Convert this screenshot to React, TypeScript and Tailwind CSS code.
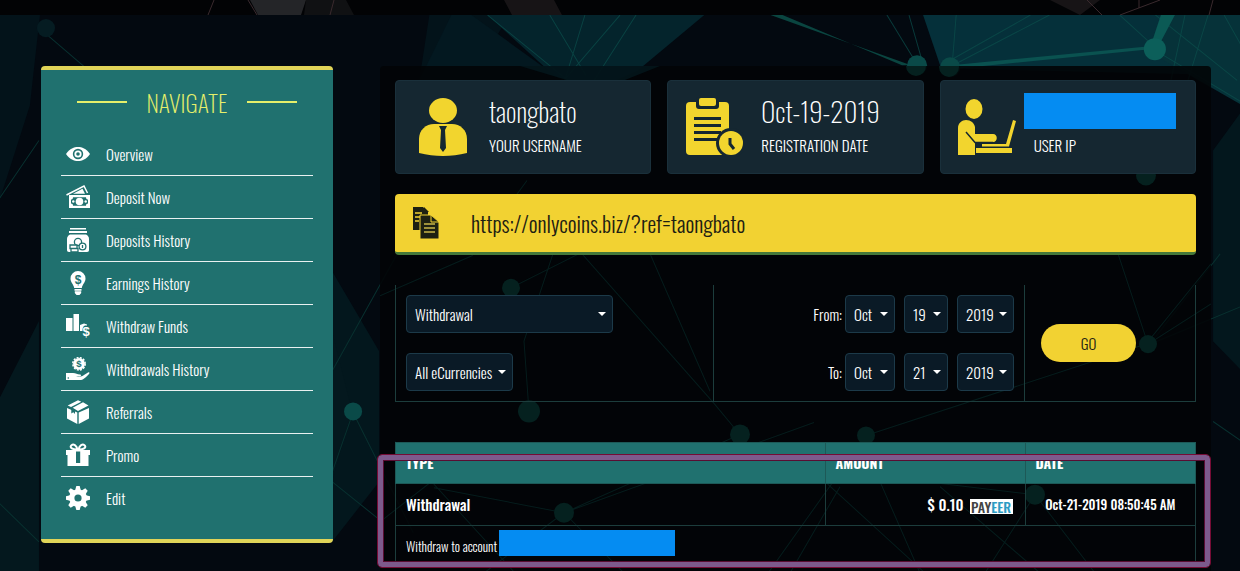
import type { ReactNode, SVGProps } from "react";

const Background = () => (
  <svg
    className="absolute inset-0 h-full w-full"
    viewBox="0 0 1240 571"
    preserveAspectRatio="xMidYMid slice"
    aria-hidden="true"
  >
    <rect width="1240" height="571" fill="#030910" />
    <path d="M430 15h80l-40 65h-50zM0 15h42l-10 90-32 100z" fill="#03131a" />
    <path d="M488 15h216l-66 55-52 24-20-8z" fill="#04242c" />
    <path d="M452 15h20l90 65H420z" fill="#031820" />
    <path d="M922 15h318v60l-300-7z" fill="#05303a" />
    <path d="M1165 15h75v90l-87-50z" fill="#063239" />
    <path d="M1211 150l29-40v260l-29-30zM333 270l47 80v130l-47 60z" fill="#03171d" />
    <path d="M0 400l41-80v251H0zM333 330l20 80-20 70z" fill="#04181e" />
    <g stroke="#0b4f4c" strokeWidth="1" fill="none" opacity=".7">
      <path d="M886 15l30 49M908 15l14 49M1029 15l-85 48M1048 15l-100 52M955 15l-4 50M1118 15l35 32M1183 15l-14 65M1206 15l-20 65M1222 15l18 32M1153 50l87 52M1135 0l100 80" />
      <path d="M488 15l80 65M550 15l36 60M636 15l-50 78M585 15l-20 65M620 15l-60 70" />
    </g>
    <path d="M770 15l140 50h-9L782 15z" fill="#0a4540" />
    <path d="M940 66l208-20v3L940 70z" fill="#0a5250" />
    <path d="M1159 15h14l-16 30h-8z" fill="#0b5a55" />
    <g stroke="#08302f" strokeWidth="1" fill="none">
      <path d="M46 32l70 60M0 500l41 40M354 411l-21 60M354 411l60 120M333 370l100-180M333 480l50 40M0 200l41-60M1148 343l92-38M1148 343l70-90M1211 420l29 20" />
    </g>
    <g fill="#0a4a48">
      <circle cx="916" cy="65" r="10" />
      <circle cx="949" cy="67" r="10" />
      <circle cx="1153" cy="49" r="11" fill="#0c5f5a" />
      <circle cx="354" cy="410" r="9" />
      <circle cx="48" cy="28" r="9" fill="#051c22" />
    </g>
  </svg>
);

const PanelNetwork = () => (
  <svg
    className="absolute inset-0 h-full w-full"
    viewBox="380 66 831 505"
    preserveAspectRatio="none"
    aria-hidden="true"
  >
    <path d="M520 66h140l-60 24z" fill="#04222a" opacity=".5" />
    <g stroke="#051c1c" strokeWidth="1" fill="none">
      <path d="M527 180l-55 75-92 40M511 287l70-35 133 150 25 30M529 410l-5-70 30-90M640 230l70 160M740 433l-176 78-130-25M866 434l280-91 65-80M866 434l-100 140M1148 343l-50-150M564 511l-80 60M564 511l60 60M564 511l250-90M825 480l100 91M880 480l40 91M840 485l-50 86M940 485l100 86M1035 493l60 78M1035 493l-170-20M1035 493l-50 78M395 440l120 131M380 520l90-70M1148 343l63-40" />
    </g>
    <g fill="#05211f">
      <circle cx="511" cy="287" r="9" />
      <circle cx="529" cy="410" r="11" />
      <circle cx="740" cy="433" r="10" />
      <circle cx="866" cy="434" r="9" />
      <circle cx="564" cy="511" r="10" />
      <circle cx="1035" cy="493" r="10" />
      <circle cx="1148" cy="343" r="9" />
      <circle cx="1146" cy="175" r="10" />
      <circle cx="916" cy="66" r="10" />
      <circle cx="949" cy="67" r="10" />
    </g>
  </svg>
);

const Icon = ({ children, ...props }: SVGProps<SVGSVGElement>) => (
  <svg viewBox="0 0 24 24" fill="currentColor" aria-hidden="true" {...props}>
    {children}
  </svg>
);

const teal = "#20716f";

const EyeIcon = () => (
  <>
    <path d="M0 12C4 6.500 8 5 12 5s8 1.500 12 7c-4 5.500-8 7-12 7S4 17.500 0 12z" />
    <circle cx="12" cy="12" r="5.200" fill={teal} />
    <circle cx="12" cy="12" r="3.600" />
    <circle cx="12" cy="12" r="1.800" fill={teal} />
  </>
);

const CashIcon = () => (
  <>
    <path d="M.500 10L18 1l3.500 7" fill="none" stroke="currentColor" strokeWidth="1.500" />
    <path d="M7 8.800l9.500-5 2.500 5z" />
    <path d="M3 10h21v13H3z" />
    <path d="M7 12.200h13c0 1.600.800 2.300 2 2.300v4c-1.200 0-2 .700-2 2.300H7c0-1.600-.800-2.300-2-2.300v-4c1.200 0 2-.700 2-2.300z" fill={teal} />
    <circle cx="13.500" cy="16.500" r="3.800" />
    <circle cx="7.300" cy="16.500" r="1.200" />
    <circle cx="19.700" cy="16.500" r="1.200" />
  </>
);

const JarIcon = () => (
  <>
    <path d="M4 0h16v1.500H4zM3 3h18v2H3z" />
    <path d="M4 6.500h16c2 1 3 2.500 3 4.500v11c0 1.300-.700 2-2 2H3c-1.300 0-2-.700-2-2V11c0-2 1-3.500 3-4.500z" />
    <g fill="#fff" stroke={teal} strokeWidth="1.300">
      <circle cx="12" cy="14" r="3.600" />
      <path d="M4 17h7v3.500H4zM5 20.500h7V24H5z" />
      <circle cx="16.500" cy="18.500" r="3.400" />
      <path d="M16.500 17v3" />
    </g>
  </>
);

const BulbIcon = () => (
  <>
    <path d="M12 0a7.500 7.500 0 0 1 7.500 7.500c0 4-3 5.500-3.700 9.500H8.200c-.700-4-3.700-5.500-3.700-9.500A7.500 7.500 0 0 1 12 0z" />
    <path d="M8.500 18h7v1.700h-7zM8.800 20.300h6.400V22l-1.700 2h-3l-1.700-2z" />
    <text x="12" y="12.500" textAnchor="middle" fontSize="12" fontWeight="700" fontFamily="Liberation Sans" fill={teal}>
      $
    </text>
  </>
);

const ChartIcon = () => (
  <>
    <path d="M0 4h6.500v13H0zM7.500 0h5.500v17H7.500z" />
    <path d="M14 11l4-1.500 3 1v1c-3-.500-4.500 1-4.500 5.500H14z" />
    <text x="20" y="21.500" textAnchor="middle" fontSize="13" fontWeight="700" fontFamily="Liberation Sans">
      $
    </text>
  </>
);

const HandIcon = () => (
  <>
    <circle cx="13" cy="6.800" r="5.900" />
    <circle cx="13" cy="6.800" r="6.200" fill="none" stroke="currentColor" strokeWidth="1.500" strokeDasharray="2 1.250" />
    <text x="13" y="10.300" textAnchor="middle" fontSize="9.500" fontWeight="700" fontFamily="Liberation Sans" fill={teal}>
      $
    </text>
    <path d="M0 16h7c3 0 4 1.500 7 1.500 1.500 0 1.500 1.500 0 1.700l-4 .300c4 .500 6 .200 8-1.500l4-2.500c1.500-.500 2 .500 1 1.500-4 4-6 6-9 6H0z" />
    <circle cx="2.300" cy="21" r=".8" fill={teal} />
  </>
);

const BoxIcon = () => (
  <>
    <path d="M1 8l10.300 4.500V24L1 18.500zM12.700 12.500L23 8v10.500L12.700 24z" />
    <path d="M12 .200l3.300 1.500L5 7 1.700 5.500zM17 2.300l5.500 3.200L12 11 6.700 7.800z" />
    <path d="M5.300 8.200v5.300l2-1.200L9 14V9.800z" fill={teal} />
  </>
);

const GiftIcon = () => (
  <>
    <path d="M0 7h24v5h-1.500v11h-21V12H0z" />
    <path d="M10 8.500h4.200V20H10z" fill={teal} />
    <g fill="none" stroke="currentColor" strokeWidth="2">
      <path d="M11.500 6.500C5 6.500 3.500 4 5.500 2.200c2-1.500 5 0 6 4.300z" />
      <path d="M12.500 6.500c6.500 0 8-2.500 6-4.300-2-1.500-5 0-6 4.300z" />
    </g>
  </>
);

const GearIcon = () => (
  <>
    {[0, 45, 90, 135].map((angle) => (
      <path key={angle} d="M10.300 0h3.400l1.300 5v14l-1.300 5h-3.400L9 19V5z" transform={`rotate(${angle} 12 12)`} />
    ))}
    <circle cx="12" cy="12" r="8.800" />
    <circle cx="12" cy="12" r="3.600" fill={teal} />
  </>
);

const navItems = [
  { label: "Overview", icon: <EyeIcon /> },
  { label: "Deposit Now", icon: <CashIcon /> },
  { label: "Deposits History", icon: <JarIcon /> },
  { label: "Earnings History", icon: <BulbIcon /> },
  { label: "Withdraw Funds", icon: <ChartIcon /> },
  { label: "Withdrawals History", icon: <HandIcon /> },
  { label: "Referrals", icon: <BoxIcon /> },
  { label: "Promo", icon: <GiftIcon /> },
  { label: "Edit", icon: <GearIcon /> },
];

const Sidebar = () => (
  <nav className="w-[292px] shrink-0 rounded border-y-4 border-[#e0d458] bg-[#20716f] px-5 pb-5">
    <div className="flex h-[63px] items-center justify-center gap-5">
      <span className="h-0.5 w-[50px] bg-[#e6ef6a]" />
      <h2 className="text-2xl font-extralight text-[#e6ef6a]">NAVIGATE</h2>
      <span className="h-0.5 w-[50px] bg-[#e6ef6a]" />
    </div>
    <ul>
      {navItems.map((item) => (
        <li key={item.label} className="border-b border-white/90 last:border-b-0">
          <a href="#" className="flex h-[42px] items-center gap-4 pl-[5px] text-[15px] font-light text-white">
            <Icon className="h-6 w-6">{item.icon}</Icon>
            {item.label}
          </a>
        </li>
      ))}
    </ul>
  </nav>
);

const UserIcon = () => (
  <svg viewBox="0 0 50 60" className="h-[60px] w-[50px]" fill="#f2d52e" aria-hidden="true">
    <ellipse cx="25" cy="13.500" rx="14" ry="12.500" />
    <path d="M1 56V42c0-9 7-15 15-15h18c8 0 15 6 15 15v14c-8 2-16 3-24 3S9 58 1 56z" />
    <path d="M21 29h8l-2 4 1 18-3 4-3-4 1-18z" fill="#152731" />
  </svg>
);

const ClipboardIcon = () => (
  <svg viewBox="0 0 58 60" className="h-[60px] w-[58px]" fill="#f2d52e" aria-hidden="true">
    <rect x="0" y="5" width="43" height="53" rx="4" />
    <rect x="10" y="0" width="23" height="12" rx="3" fill="#152731" />
    <rect x="13" y="1" width="17" height="8" rx="2" />
    <path d="M8 20h27v3H8zM8 27h27v3H8zM8 34h27v3H8zM8 41h24v3H8z" fill="#152731" />
    <circle cx="45" cy="46" r="15" fill="#152731" />
    <circle cx="45" cy="46" r="12" />
    <path d="M44 41v6l4 5" fill="none" stroke="#152731" strokeWidth="3" />
  </svg>
);

const LaptopUserIcon = () => (
  <svg viewBox="0 0 58 60" className="h-[60px] w-[58px]" fill="#f2d52e" aria-hidden="true">
    <ellipse cx="16" cy="12" rx="8.500" ry="10" />
    <path d="M0 58V31c0-5 4-8 8-8 5 0 8 3 9 7v7h18c5 0 5 8 0 8H17v13z" />
    <path d="M8 35l9 10.500h18" fill="none" stroke="#152731" strokeWidth="1.500" />
    <path d="M18 51h36v5H18zM24 47h24l7-24 3 1-7 25.500H24z" />
  </svg>
);

type StatCardProps = { icon: ReactNode; value: ReactNode; label: string };

const StatCard = ({ icon, value, label }: StatCardProps) => (
  <div className="flex h-[94px] min-w-0 flex-1 items-center rounded border border-[#1a303b] bg-[#152731] text-white">
    <div className="flex w-[93px] shrink-0 justify-center">{icon}</div>
    <div>
      <div className="flex h-9 items-center text-[27px] font-extralight">{value}</div>
      <div className="text-[15px] leading-8 font-light">{label}</div>
    </div>
  </div>
);

const CopyIcon = () => (
  <svg viewBox="0 0 26 32" className="h-8 w-[26px]" fill="#1d2012" aria-hidden="true">
    <path d="M0 0h10l5 5v18H0z" />
    <path d="M11 0l5 5h-5z" />
    <path d="M2 6h7M2 10h5M2 14h4" stroke="#f2d232" strokeWidth="1.500" />
    <path d="M7 8h11l8 7v17H7z" stroke="#f2d232" />
    <path d="M18 8v7h8" fill="none" stroke="#f2d232" />
    <path d="M11 17h11M11 21h11M11 25h11" stroke="#c9b64a" strokeWidth="1.500" />
  </svg>
);

type PickerProps = { label: string; options: string[]; className: string };

const Picker = ({ label, options, className }: PickerProps) => (
  <span className={`relative inline-block ${className}`}>
    <select
      aria-label={label}
      className="h-[38px] w-full appearance-none rounded border border-[#1c3a49] bg-[#0a1a26] pl-2 text-[15px] font-light text-white"
    >
      {options.map((option) => (
        <option key={option}>{option}</option>
      ))}
    </select>
    <svg viewBox="0 0 8 4" className="pointer-events-none absolute top-[17px] right-[7px] h-1 w-2" fill="#fff" aria-hidden="true">
      <path d="M0 0h8L4 4z" />
    </svg>
  </span>
);

const DateRow = ({ label, day }: { label: string; day: string }) => (
  <div className="flex items-center justify-end">
    <span className="mr-[3px] text-[15px] font-light">{label}:</span>
    <div className="flex gap-[9px]">
      <Picker label={`${label} month`} options={["Oct"]} className="w-[50px]" />
      <Picker label={`${label} day`} options={[day]} className="w-11" />
      <Picker label={`${label} year`} options={["2019"]} className="w-[57px]" />
    </div>
  </div>
);

const Filters = () => (
  <form className="mt-[30px] grid grid-cols-[318fr_311fr_170fr] divide-x divide-[#1c3d3c] border-x border-b border-[#1c3d3c] text-white">
    <div className="flex flex-col items-start gap-5 p-2.5">
      <Picker label="Type" options={["Withdrawal"]} className="w-[207px]" />
      <Picker label="Currency" options={["All eCurrencies"]} className="w-[107px]" />
    </div>
    <div className="flex flex-col gap-5 p-2.5">
      <DateRow label="From" day="19" />
      <DateRow label="To" day="21" />
    </div>
    <div className="flex items-center pl-4">
      <button type="button" className="h-[38px] w-[95px] rounded-full bg-[#f2d232] text-[15px] font-light text-[#1d2012]">
        GO
      </button>
    </div>
  </form>
);

const History = () => (
  <div className="relative mt-10">
    <table className="w-full table-fixed border-collapse text-left text-white">
      <colgroup>
        <col className="w-[53.7%]" />
        <col className="w-[25%]" />
        <col />
      </colgroup>
      <thead>
        <tr className="h-[41px] bg-[#20716f] text-sm">
          <th className="border border-[#1d5957] px-2.5 py-0">TYPE</th>
          <th className="border border-[#1d5957] px-2.5 py-0">AMOUNT</th>
          <th className="border border-[#1d5957] px-2.5 py-0">DATE</th>
        </tr>
      </thead>
      <tbody>
        <tr className="h-[42px]">
          <td className="border border-[#1c3d3c] px-2.5 py-0 text-[15px] font-medium">Withdrawal</td>
          <td className="border border-[#1c3d3c] px-3 py-0">
            <div className="flex items-center justify-end gap-1.5">
              <span className="text-[15px] font-medium">$ 0.10</span>
              <span className="mt-1 flex h-[15px] w-[43px] items-center justify-center bg-white text-sm font-medium text-[#444]">
                PAY<span className="text-[#2d9cc4]">EER</span>
              </span>
            </div>
          </td>
          <td className="border border-[#1c3d3c] px-0 py-0 text-center text-[13px] font-medium">Oct-21-2019 08:50:45 AM</td>
        </tr>
        <tr className="h-[42px]">
          <td colSpan={3} className="border border-[#1c3d3c] px-2.5 py-0">
            <div className="flex items-center gap-0.5 text-[13px] font-light">
              Withdraw to account
              <span className="-mt-2 h-[26px] w-44 bg-[#058cf2]" />
            </div>
          </td>
        </tr>
      </tbody>
    </table>
    <div className="pointer-events-none absolute top-[13px] -right-3.5 bottom-px -left-[17px] rounded-sm border-[5px] border-[#7d5a8c] outline outline-[#750c35]">
      <div className="h-full border border-[#590d32]" />
    </div>
  </div>
);

export default function App() {
  return (
    <div className="relative flex min-h-screen flex-col overflow-hidden bg-[#030910] font-[Oswald,'Liberation_Sans_Narrow','Roboto_Condensed',sans-serif]">
      <Background />
      <header className="relative h-[15px] bg-[#020305]">
        <svg viewBox="0 0 1240 15" preserveAspectRatio="none" className="h-full w-full" aria-hidden="true">
          <path d="M250 0h56l-5 15h-43z" fill="#242528" />
          <path d="M306 0h40l8 15h-50z" fill="#101113" />
          <path d="M504 0h50l8 15h-50zM1050 0h50l-20 15z" fill="#171416" />
          <path d="M248 0l9 15M334 0l-4 15M214 0l-6 15M1087 0l15 15M1160 0l-40 15M1213 0l-4 15M1139 0v8" stroke="#3a2a2e" fill="none" />
        </svg>
      </header>
      <div className="relative flex flex-1 items-start justify-between pt-[51px] pr-[29px] pl-[41px]">
        <Sidebar />
        <main className="relative ml-[47px] min-w-0 flex-1 rounded bg-[#020407]/90 px-[15px] pt-3.5 pb-[5px]">
          <PanelNetwork />
          <div className="relative">
            <div className="flex gap-4">
              <StatCard icon={<UserIcon />} value="taongbato" label="YOUR USERNAME" />
              <StatCard icon={<ClipboardIcon />} value="Oct-19-2019" label="REGISTRATION DATE" />
              <StatCard
                icon={<LaptopUserIcon />}
                value={<span className="-ml-2.5 h-9 w-[152px] bg-[#058cf2]" />}
                label="USER IP"
              />
            </div>
            <div className="mt-5 flex h-[61px] items-center gap-8 rounded border-b-[3px] border-[#46793a] bg-[#f2d232] pl-[18px]">
              <CopyIcon />
              <a href="#" className="text-[22px] font-light text-[#1d2012]">
                https://onlycoins.biz/?ref=taongbato
              </a>
            </div>
            <Filters />
            <History />
          </div>
        </main>
      </div>
    </div>
  );
}
